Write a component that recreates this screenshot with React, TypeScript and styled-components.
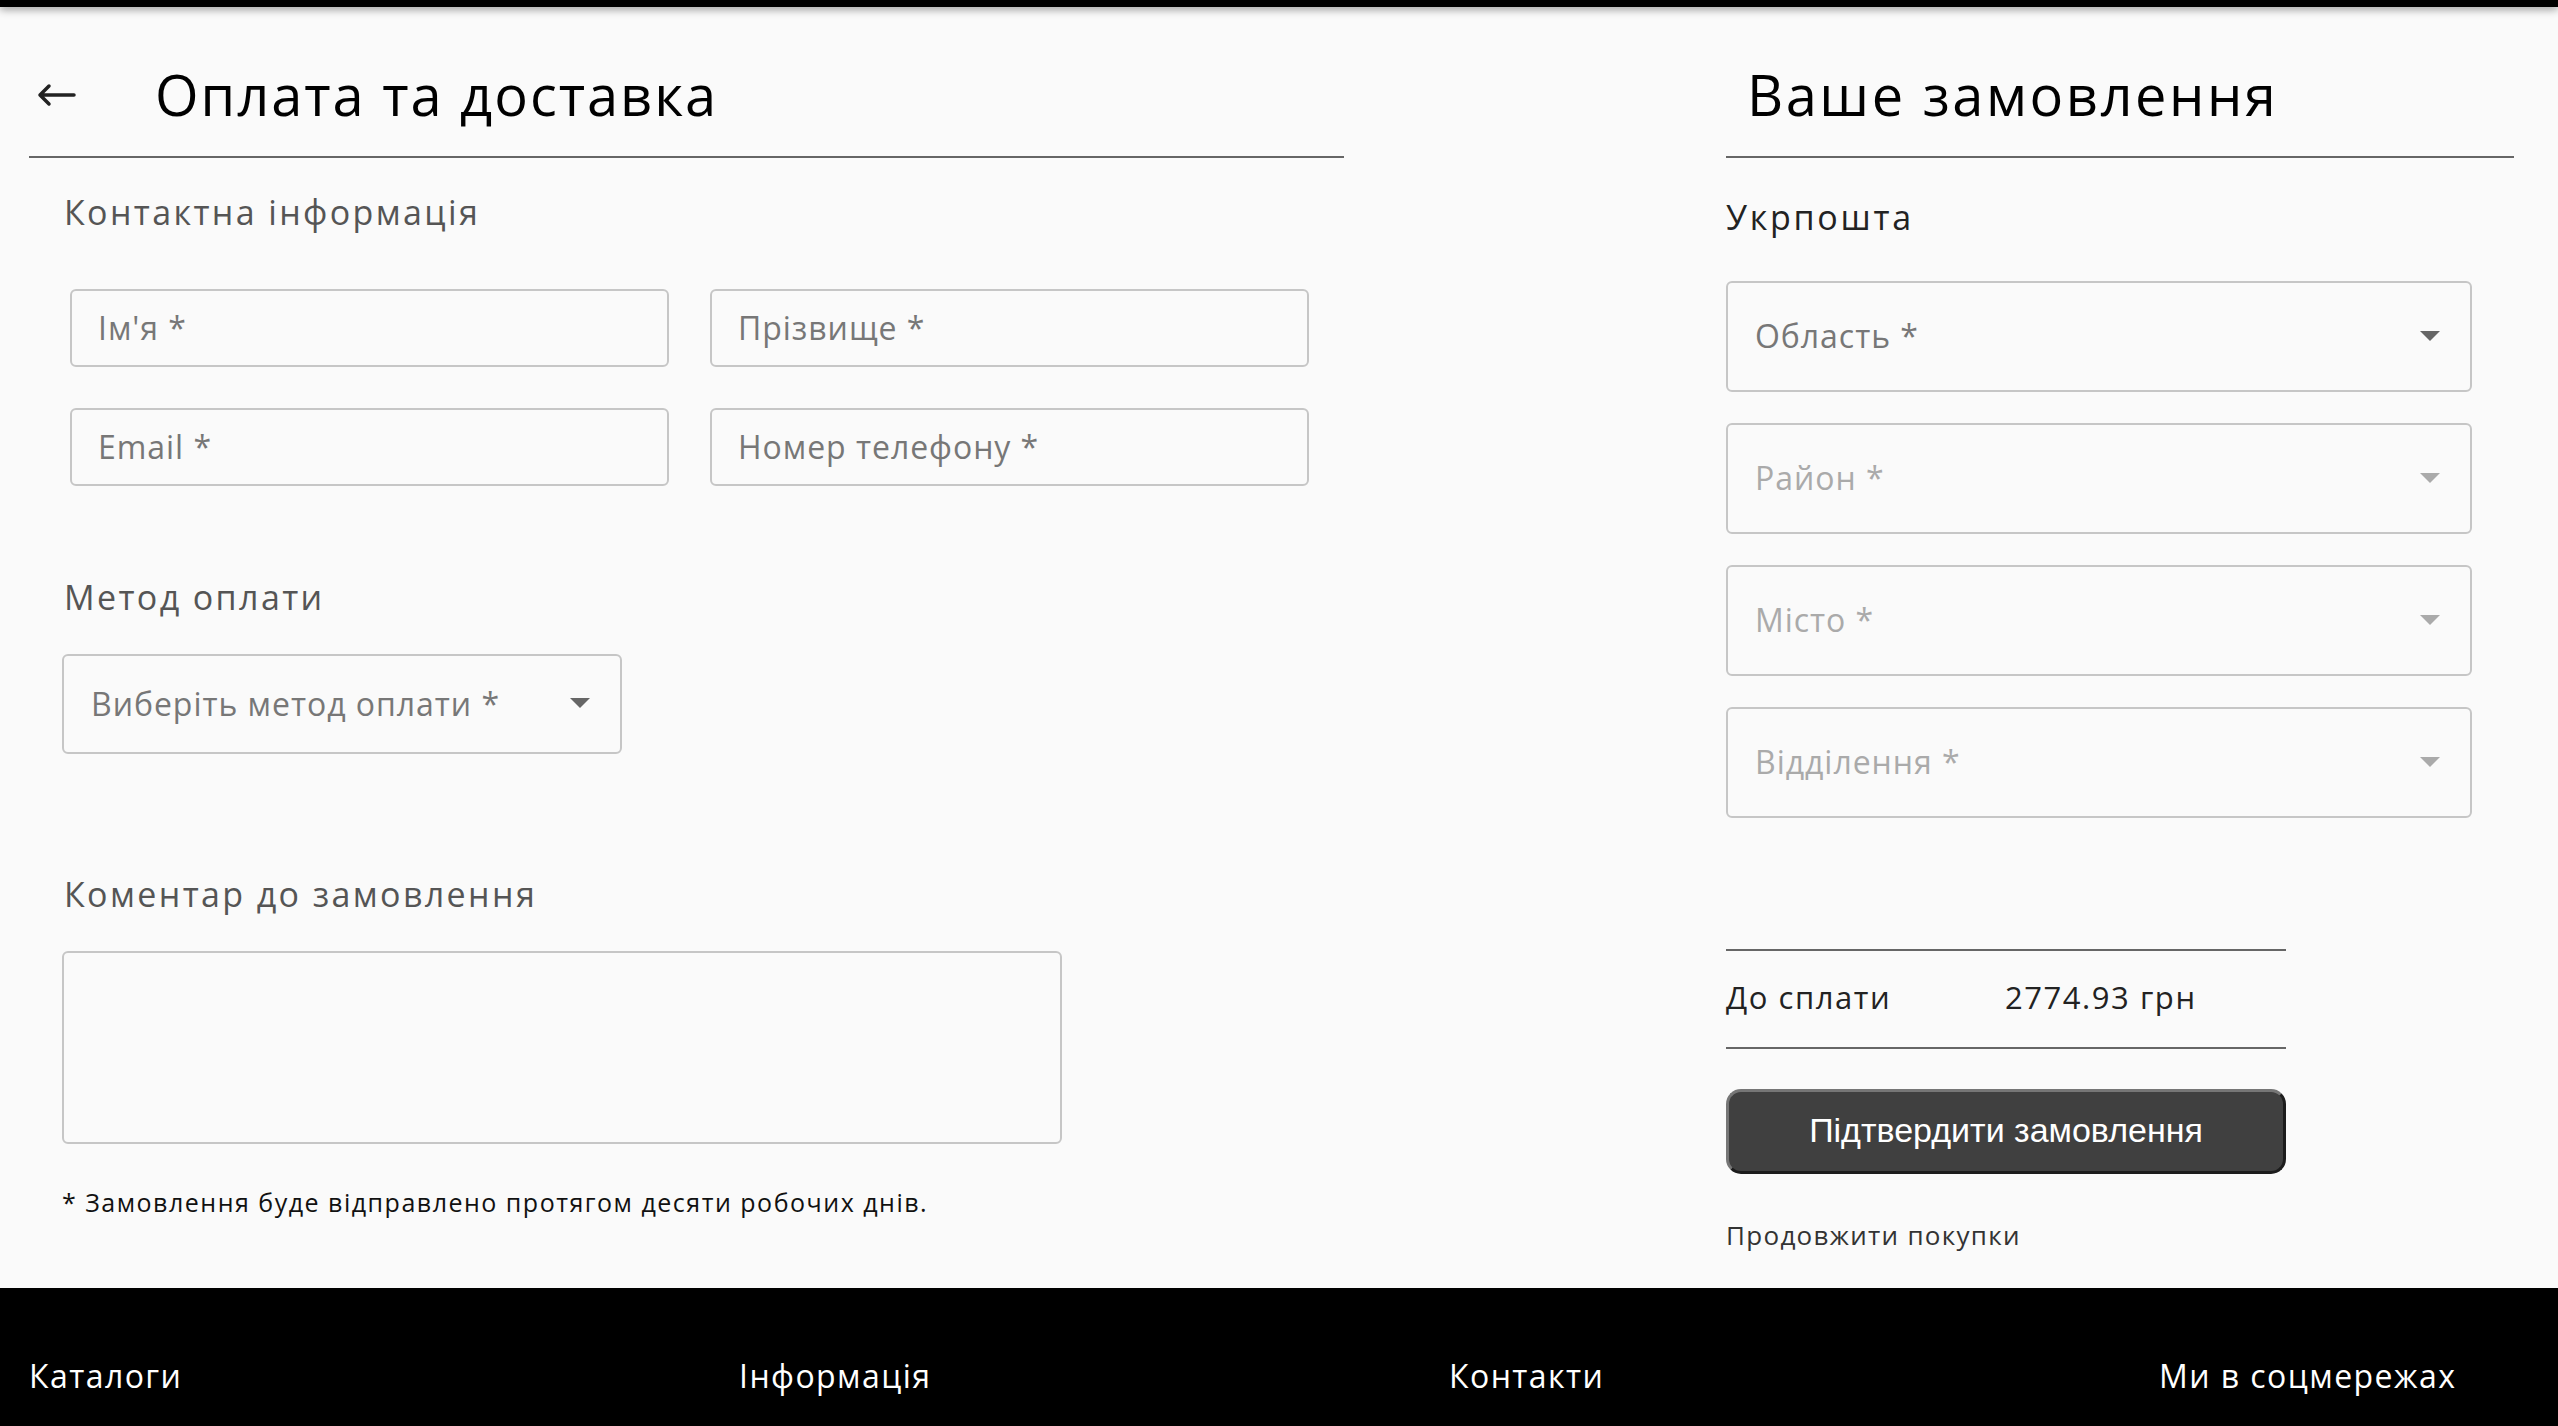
import styled, { createGlobalStyle } from "styled-components";

const GlobalStyle = createGlobalStyle`
  * {
    box-sizing: border-box;
  }
  body {
    margin: 0;
    background: #fafafa;
    font-family: "Open Sans", "Noto Sans", sans-serif;
    color: #111;
  }
`;

const contactFields = ["Ім'я *", "Прізвище *", "Email *", "Номер телефону *"];

const deliveryFields = [
  { label: "Область *", disabled: false },
  { label: "Район *", disabled: true },
  { label: "Місто *", disabled: true },
  { label: "Відділення *", disabled: true },
];

const footerColumns = ["Каталоги", "Інформація", "Контакти", "Ми в соцмережах"];

const Caret = ({ color }: { color: string }) => (
  <svg width="20" height="10" viewBox="0 0 20 10">
    <path d="M0 0 L20 0 L10 10 Z" fill={color} />
  </svg>
);

const BackArrow = () => (
  <svg width="40" height="24" viewBox="0 0 40 24">
    <path
      d="M38 12 H4 M13 3 L4 12 L13 21"
      stroke="#222"
      strokeWidth="3.5"
      fill="none"
      strokeLinecap="round"
      strokeLinejoin="round"
    />
  </svg>
);

export default function App() {
  return (
    <>
      <GlobalStyle />
      <TopBar />
      <Main>
        <LeftCol>
          <TitleRow>
            <BackButton title="назад">
              <BackArrow />
            </BackButton>
            <PageTitle $spacing={0.035}>Оплата та доставка</PageTitle>
          </TitleRow>
          <FormBody>
            <SectionLabel>Контактна інформація</SectionLabel>
            <FieldGrid>
              {contactFields.map((f) => (
                <TextField key={f} placeholder={f} />
              ))}
            </FieldGrid>

            <SectionLabel $top={92}>Метод оплати</SectionLabel>
            <SelectBox $width={560} $height={100}>
              <SelectText>Виберіть метод оплати *</SelectText>
              <Caret color="#666" />
            </SelectBox>

            <SectionLabel $top={121}>Коментар до замовлення</SectionLabel>
            <Comment />

            <Note>* Замовлення буде відправлено протягом десяти робочих днів.</Note>
          </FormBody>
        </LeftCol>

        <RightCol>
          <OrderTitleRow>
            <PageTitle $spacing={0.045}>Ваше замовлення</PageTitle>
          </OrderTitleRow>
          <CarrierLabel>Укрпошта</CarrierLabel>
          <SelectStack>
            {deliveryFields.map((d) => (
              <SelectBox key={d.label} $width={746} $height={111}>
                <SelectText $disabled={d.disabled}>{d.label}</SelectText>
                <Caret color={d.disabled ? "#aaa" : "#666"} />
              </SelectBox>
            ))}
          </SelectStack>

          <TotalRow>
            <span>До сплати</span>
            <span>2774.93 грн</span>
          </TotalRow>
          <ConfirmButton>Підтвердити замовлення</ConfirmButton>
          <ContinueLink>Продовжити покупки</ContinueLink>
        </RightCol>
      </Main>

      <Footer>
        {footerColumns.map((c) => (
          <FooterHeading key={c}>{c}</FooterHeading>
        ))}
      </Footer>
    </>
  );
}

const TopBar = styled.div`
  height: 7px;
  background: #000;
  box-shadow: 0 2px 8px rgba(0, 0, 0, 0.45);
`;

const Main = styled.main`
  display: flex;
  justify-content: space-between;
  padding: 0 44px 37px 29px;
`;

const LeftCol = styled.section`
  width: 1315px;
  display: flex;
  flex-direction: column;
`;

const TitleRow = styled.div`
  display: flex;
  align-items: center;
  gap: 79px;
  margin-top: 54px;
  padding: 0 0 28px 7px;
  border-bottom: 2px solid #666;
`;

const BackButton = styled.div`
  display: flex;
  cursor: pointer;
`;

const PageTitle = styled.h1<{ $spacing: number }>`
  margin: 0;
  font-size: 56px;
  line-height: 67px;
  font-weight: 400;
  letter-spacing: ${(p) => p.$spacing}em;
  color: #000;
`;

const FormBody = styled.div`
  padding-left: 33px;
  display: flex;
  flex-direction: column;
  align-items: flex-start;
`;

const SectionLabel = styled.h2<{ $top?: number }>`
  margin: ${(p) => p.$top ?? 35}px 0 38px 2px;
  font-size: 34px;
  line-height: 38px;
  font-weight: 400;
  letter-spacing: 0.07em;
  color: #555;
`;

const FieldGrid = styled.div`
  display: grid;
  grid-template-columns: 599px 599px;
  gap: 41px;
  margin: 20px 0 0 8px;
`;

const TextField = styled.input`
  height: 78px;
  border: 2px solid #c6c6c6;
  border-radius: 6px;
  background: transparent;
  padding: 0 26px 2px;
  font-family: "Open Sans", sans-serif;
  font-size: 32px;
  letter-spacing: 0.03em;
  color: #333;
  outline: none;
  &::placeholder {
    color: #777;
  }
`;

const SelectBox = styled.div<{ $width: number; $height: number }>`
  width: ${(p) => p.$width}px;
  height: ${(p) => p.$height}px;
  display: flex;
  align-items: center;
  justify-content: space-between;
  padding: 0 30px 2px 27px;
  border: 2px solid #c6c6c6;
  border-radius: 6px;
  cursor: pointer;
`;

const SelectText = styled.span<{ $disabled?: boolean }>`
  font-size: 32px;
  letter-spacing: 0.03em;
  color: ${(p) => (p.$disabled ? "#aaa" : "#777")};
`;

const Comment = styled.textarea`
  width: 1000px;
  height: 193px;
  border: 2px solid #c6c6c6;
  border-radius: 6px;
  background: transparent;
  resize: none;
  outline: none;
`;

const Note = styled.p`
  margin: 44px 0 0;
  font-size: 25px;
  line-height: 29px;
  letter-spacing: 0.06em;
  color: #111;
`;

const RightCol = styled.section`
  width: 788px;
  display: flex;
  flex-direction: column;
  align-items: flex-start;
`;

const OrderTitleRow = styled.div`
  align-self: stretch;
  margin-top: 54px;
  padding: 0 0 28px 21px;
  border-bottom: 2px solid #666;
`;

const CarrierLabel = styled.h2`
  margin: 40px 0 0;
  font-size: 34px;
  line-height: 38px;
  font-weight: 400;
  letter-spacing: 0.08em;
  color: #222;
`;

const SelectStack = styled.div`
  display: flex;
  flex-direction: column;
  gap: 31px;
  margin-top: 45px;
`;

const TotalRow = styled.div`
  width: 560px;
  height: 100px;
  margin-top: 131px;
  display: grid;
  grid-template-columns: 279px auto;
  align-items: center;
  border-top: 2px solid #666;
  border-bottom: 2px solid #666;
  font-size: 31px;
  letter-spacing: 0.05em;
  color: #222;
  line-height: 1;
  padding-bottom: 4px;
`;

const ConfirmButton = styled.button`
  width: 560px;
  height: 85px;
  margin-top: 40px;
  background: #404040;
  border: 3px solid;
  border-color: #767676 #1c1c1c #1c1c1c #767676;
  border-radius: 15px;
  font-family: "Liberation Sans", Arial, sans-serif;
  font-size: 34px;
  color: #fff;
  cursor: pointer;
  padding-bottom: 4px;
`;

const ContinueLink = styled.a`
  margin-top: 46px;
  font-size: 26px;
  line-height: 31px;
  letter-spacing: 0.05em;
  color: #333;
  cursor: pointer;
`;

const Footer = styled.footer`
  background: #000;
  display: grid;
  grid-template-columns: 710px 710px 710px auto;
  padding: 69px 29px 80px;
`;

const FooterHeading = styled.h3`
  margin: 0;
  font-size: 32px;
  line-height: 38px;
  font-weight: 500;
  letter-spacing: 0.045em;
  color: #fff;
`;
